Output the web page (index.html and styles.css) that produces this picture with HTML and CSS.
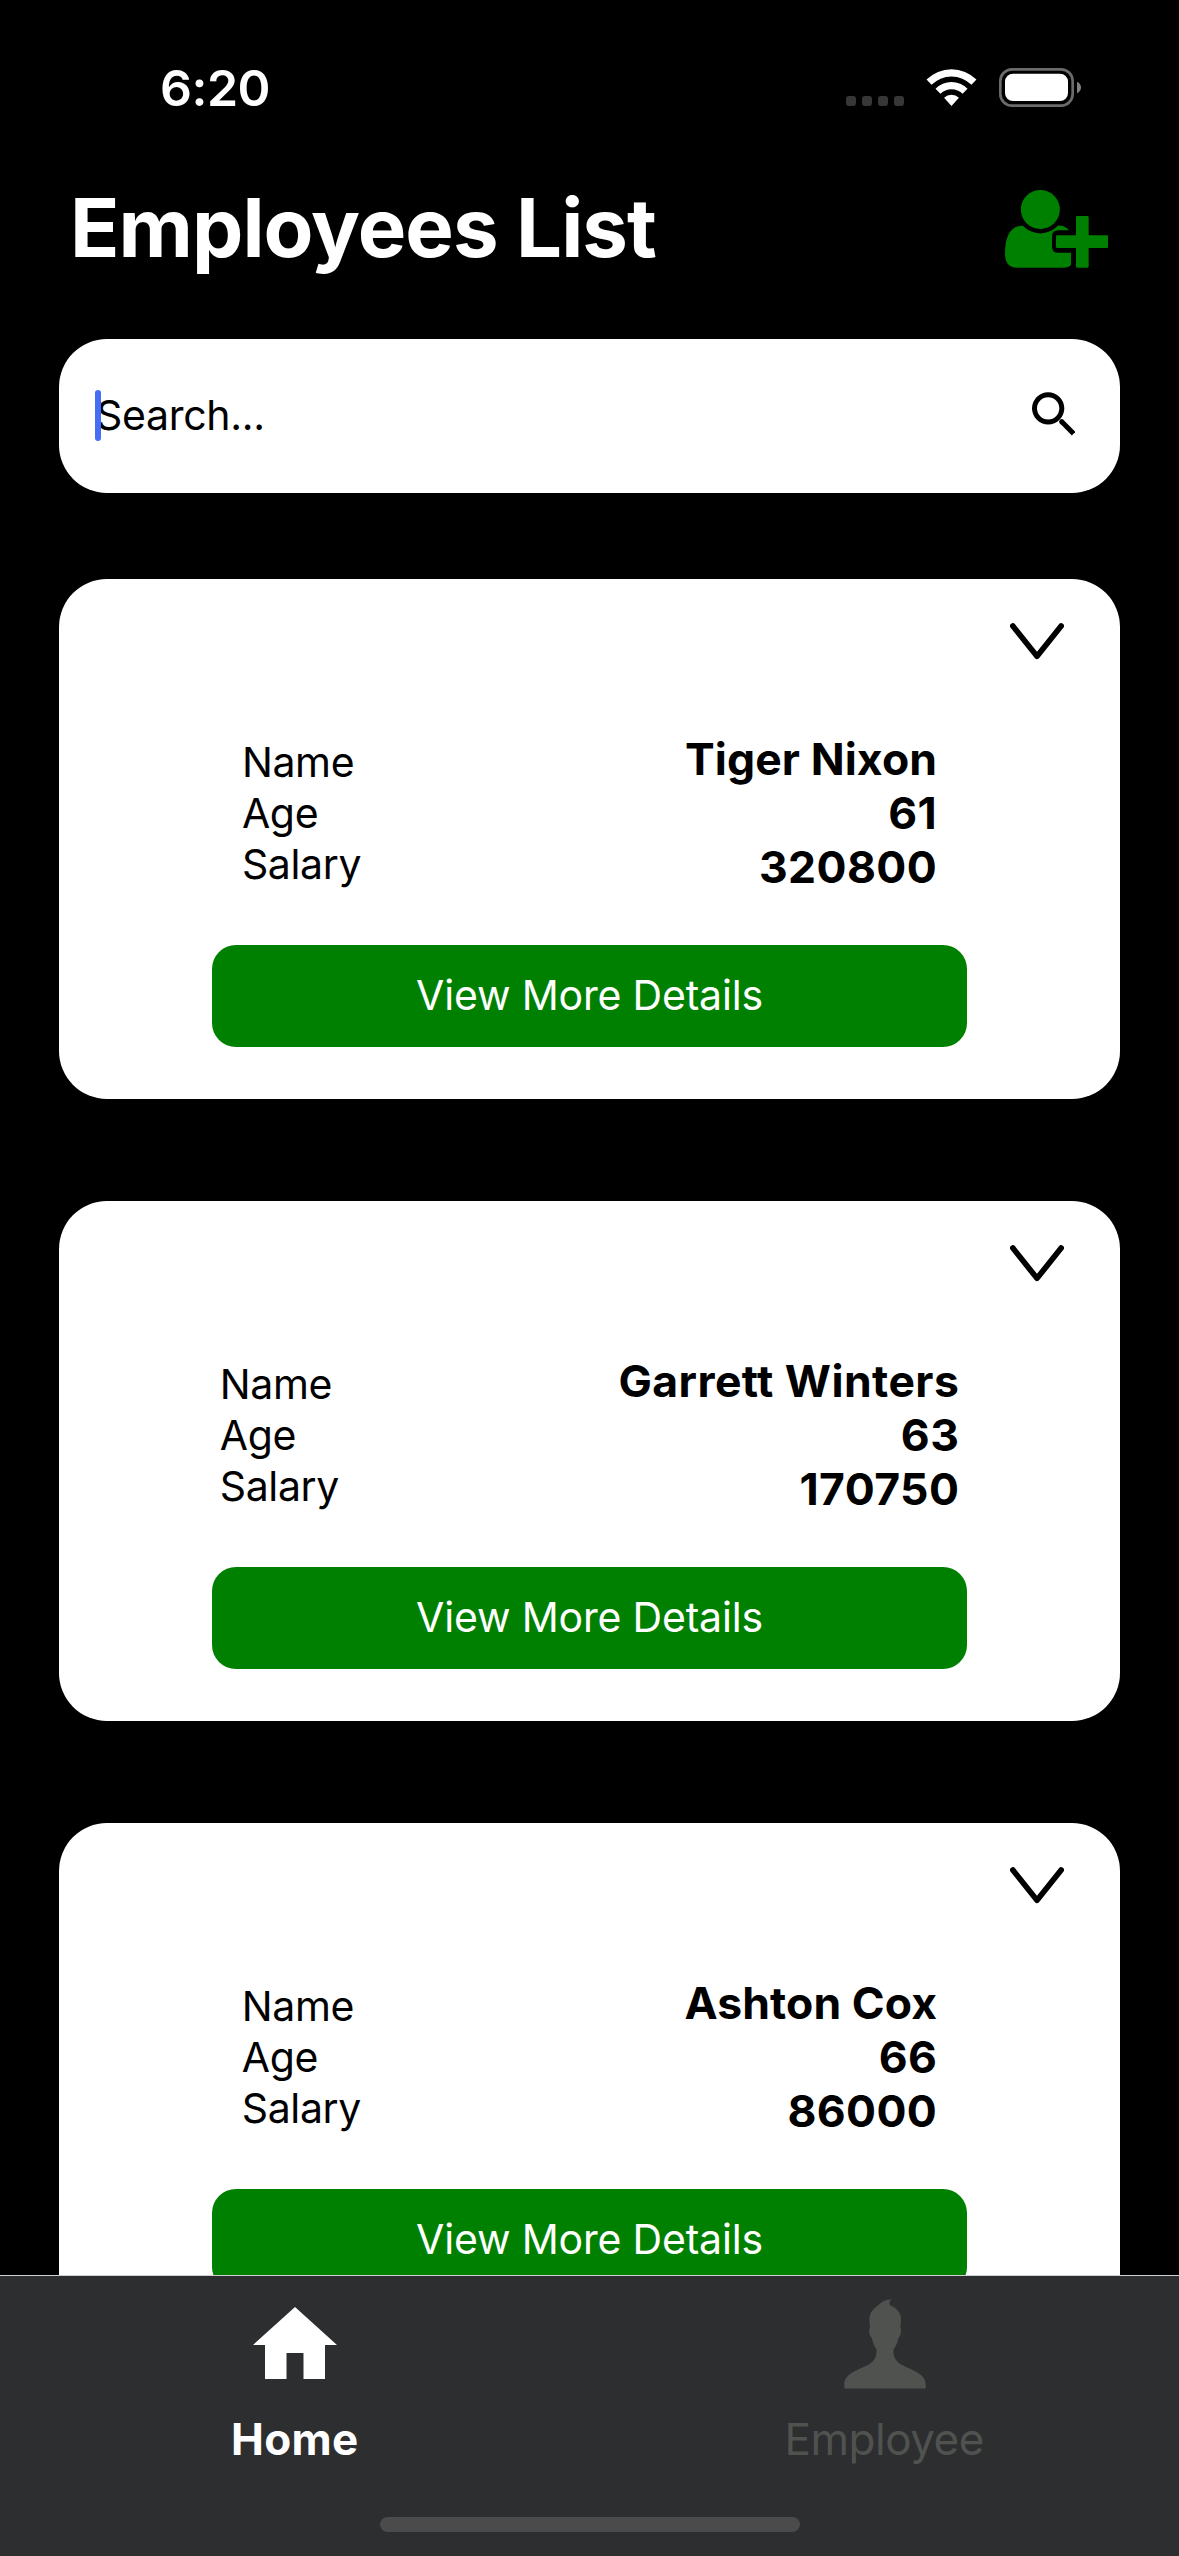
FILE: index.html
```html
<!DOCTYPE html>
<html lang="en">
<head>
<meta charset="utf-8">
<title>Employees List</title>
<link rel="stylesheet" href="styles.css">
</head>
<body>
<div class="screen">
  <header class="status">
    <span class="time">6:20</span>
    <div class="indicators">
      <div class="dots"><i></i><i></i><i></i><i></i></div>
      <svg class="wifi" viewBox="318 56 153 112"><path d="M319 88A107 107 0 0 1 470 88L455 104A85 85 0 0 0 334 104ZM346 116A68 68 0 0 1 443 116L428 131A47 47 0 0 0 361 131ZM372 143A32 32 0 0 1 417 143L394.500 168Z"/></svg>
      <svg class="battery" viewBox="537 54 246 117"><rect class="shell" x="541" y="58" width="217" height="109" rx="35"/><rect class="charge" x="555" y="71" width="189" height="82" rx="24"/><path class="nub" d="M771 95Q783 101 783 112.500T771 130Z"/></svg>
    </div>
  </header>

  <div class="titlebar">
    <h1 class="title">Employees List</h1>
    <svg class="add" viewBox="555 420 309 234"><circle cx="661" cy="478.500" r="58.500"/><path d="M604 527C570 530 555 560 555 612C555 640 570 653.500 592 653.500H730C740 653.500 748 650 753 645V608.500H715Q696 608.500 696 590V560Q696 541 716 541H747C738 531 728 526 713 527A70 70 0 0 1 609 527Z"/><path d="M772 498H802Q806 498 806 502V556H860Q864 556 864 560V590Q864 594 860 594H806V649Q806 653 802 653H772Q768 653 768 649V594H712Q708 594 708 590V560Q708 556 712 556H768V502Q768 498 772 498Z"/></svg>
  </div>

  <div class="search">
    <span class="placeholder">Search...</span>
    <svg class="lens" viewBox="215 217 130 131"><circle cx="263.500" cy="266" r="41"/><path class="joint" d="M304 306L305 307"/><path d="M303 305L340 342"/></svg>
  </div>

  <main class="list">
    <article class="card">
      <svg class="chevron" viewBox="150 908 162 110"><path d="M158.500 917L231 1008L303.500 917"/></svg>
      <div class="info">
        <div class="labels"><span>Name</span><span>Age</span><span>Salary</span></div>
        <div class="values"><span>Tiger Nixon</span><span class="number">61</span><span class="number">320800</span></div>
      </div>
      <div class="button"><span>View More Details</span></div>
    </article>
    <article class="card">
      <svg class="chevron" viewBox="150 908 162 110"><path d="M158.500 917L231 1008L303.500 917"/></svg>
      <div class="info">
        <div class="labels"><span>Name</span><span>Age</span><span>Salary</span></div>
        <div class="values"><span class="long">Garrett Winters</span><span class="number">63</span><span class="number">170750</span></div>
      </div>
      <div class="button"><span>View More Details</span></div>
    </article>
    <article class="card">
      <svg class="chevron" viewBox="150 908 162 110"><path d="M158.500 917L231 1008L303.500 917"/></svg>
      <div class="info">
        <div class="labels"><span>Name</span><span>Age</span><span>Salary</span></div>
        <div class="values"><span>Ashton Cox</span><span class="number">66</span><span class="number">86000</span></div>
      </div>
      <div class="button"><span>View More Details</span></div>
    </article>
  </main>

  <nav class="tabbar">
    <div class="tabs">
      <div class="tab active">
        <svg class="tab-icon home" viewBox="0 0 84 72"><path d="M42 0L84 38H72V72H50.500V46H33.500V72H12V38H0Z"/></svg>
        <span>Home</span>
      </div>
      <div class="tab">
        <svg class="tab-icon person" viewBox="252 119 246 269"><path d="M397 120C388 124 386 130 391 138C410 145 424 160 423 182L421 205C425 210 424 228 415 236C412 252 406 262 400 270C400 285 402 303 425 316C455 332 497 343 497 374V387H253V374C253 345 290 332 325 316C345 304 350 290 350 270C344 262 338 250 336 236C327 228 325 212 330 205L328 180C328 155 345 145 358 134C368 124 380 119 397 120Z"/></svg>
        <span class="tab-name">Employee</span>
      </div>
    </div>
    <div class="handle"></div>
  </nav>
</div>
</body>
</html>
```
FILE: styles.css
```css
* {
  box-sizing: border-box;
}

body {
  margin: 0;
  background: #000;
  font-family: Inter, "Liberation Sans", sans-serif;
}

svg {
  display: block;
  flex: none;
}

.screen {
  display: flex;
  flex-direction: column;
  width: 1179px;
  height: 2556px;
  overflow: hidden;
  background: #000;
}

/* Status bar */
.status {
  display: flex;
  justify-content: space-between;
  height: 177px;
  padding: 68px 98px 0 160px;
  color: #fff;
}

.time {
  font-size: 50px;
  font-weight: 600;
  line-height: 40px;
  letter-spacing: -0.5px;
}

.indicators {
  display: flex;
  align-items: flex-end;
  gap: 22px;
  height: 39px;
}

.dots {
  display: flex;
  gap: 6px;
  padding-bottom: 1px;
}

.dots i {
  width: 10px;
  height: 10px;
  border-radius: 3px;
  background: #373737;
}

.wifi {
  width: 51px;
  height: 37px;
  margin-bottom: 1px;
  fill: #fff;
}

.battery {
  width: 82px;
  height: 39px;
}

.shell {
  fill: none;
  stroke: #6b6b6b;
  stroke-width: 8;
}

.charge {
  fill: #fff;
}

.nub {
  fill: #808080;
}

/* Heading */
.titlebar {
  display: flex;
  justify-content: space-between;
  height: 162px;
  padding: 0 71px 0 70px;
}

.title {
  margin: 0;
  color: #fff;
  font-size: 81.5px;
  font-weight: 700;
  line-height: 102px;
  letter-spacing: -0.950px;
}

.add {
  width: 103px;
  height: 78px;
  margin-top: 13px;
  fill: #008000;
}

/* Search field */
.search {
  display: flex;
  justify-content: space-between;
  flex: none;
  height: 154px;
  margin: 0 59px;
  padding: 51px 45px 0 36px;
  border-radius: 48px;
  background: #fff;
}

.placeholder {
  position: relative;
  padding-left: 1px;
  font-size: 41px;
  line-height: 50px;
  letter-spacing: -0.300px;
}

.placeholder::before {
  content: "";
  position: absolute;
  left: 0;
  top: 0;
  width: 6px;
  height: 51px;
  border-radius: 3px;
  background: #446ff2;
}

.lens {
  width: 43.300px;
  height: 43.700px;
  margin-top: 2px;
  fill: none;
  stroke: #000;
  stroke-width: 15;
}

.joint {
  stroke-linecap: round;
}

/* Employee cards */
.list {
  display: flex;
  flex-direction: column;
  flex: 1;
  gap: 102.400px;
  min-height: 0;
  margin-top: 86px;
  padding: 0 59px;
  overflow: hidden;
}

.card {
  display: flex;
  flex-direction: column;
  flex: none;
  height: 519.600px;
  padding: 44px 21px 0;
  border-radius: 48px;
  background: #fff;
}

.chevron {
  align-self: flex-end;
  width: 54px;
  height: 36.700px;
  margin-right: 35px;
  fill: none;
  stroke: #000;
  stroke-width: 17;
  stroke-linecap: round;
  stroke-linejoin: round;
}

.info {
  display: flex;
  justify-content: space-around;
  height: 207px;
  margin-top: 72px;
  margin-bottom: 6.300px;
}

.labels,
.values {
  display: flex;
  flex-direction: column;
}

.labels {
  padding-top: 5px;
  font-size: 41px;
  line-height: 51px;
  letter-spacing: -0.350px;
}

.values {
  align-items: flex-end;
  font-size: 44.500px;
  font-weight: 700;
  line-height: 54px;
  letter-spacing: 0.100px;
}

.number {
  letter-spacing: 0.400px;
}

.long {
  letter-spacing: 0.450px;
}

.button {
  align-self: center;
  width: 755px;
  height: 102px;
  border-radius: 24px;
  background: #008000;
  color: #fff;
  font-size: 41px;
  line-height: 100px;
  letter-spacing: -0.180px;
  text-align: center;
}

/* Bottom navigation */
.tabbar {
  display: flex;
  flex-direction: column;
  align-items: center;
  flex: none;
  height: 281px;
  border-top: 1px solid #d0d0d0;
  background: #2d2e30;
}

.tabs {
  display: flex;
  width: 100%;
  height: 241px;
}

.tab {
  display: flex;
  flex: 1;
  flex-direction: column;
  align-items: center;
  color: #505250;
  font-size: 44px;
  line-height: 54px;
}

.tab-icon {
  margin-bottom: 23px;
  fill: currentColor;
}

.home {
  width: 84px;
  height: 72px;
  margin-top: 31px;
  margin-bottom: 33px;
}

.person {
  width: 82px;
  height: 90px;
  margin-top: 23px;
  margin-left: 2px;
}

.tab-name {
  letter-spacing: -0.500px;
}

.active {
  color: #fff;
  font-weight: 700;
  letter-spacing: 0.300px;
}

.handle {
  width: 420px;
  height: 15px;
  border-radius: 8px;
  background: #4b4b4b;
}
```
